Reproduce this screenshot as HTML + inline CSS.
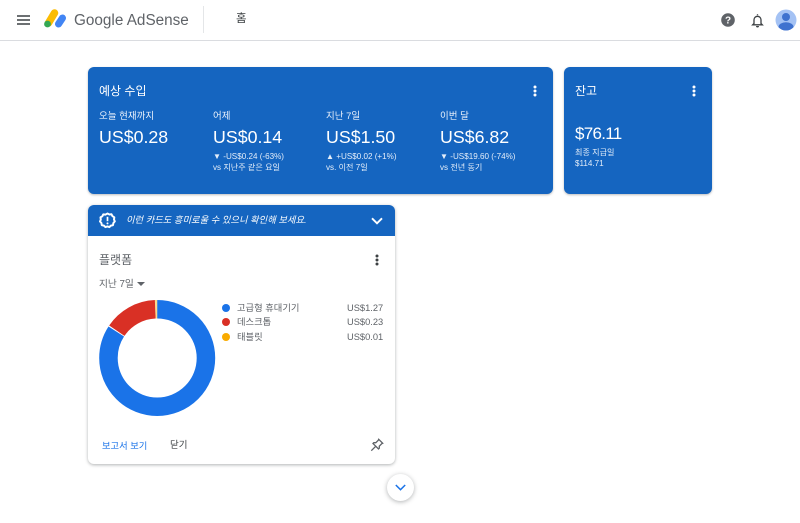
<!DOCTYPE html>
<html lang="ko">
<head>
<meta charset="utf-8">
<title>Google AdSense</title>
<style>
html,body{margin:0;padding:0;width:800px;height:523px;overflow:hidden;background:#fff}
#p{position:absolute;left:0;top:0;width:800px;height:523px;filter:blur(.3px);font-family:"Liberation Sans","Noto Sans CJK KR",sans-serif;color:#3c4043}
.a{position:absolute;white-space:nowrap}
.card{position:absolute;background:#1565c0;border-radius:6px;box-shadow:0 1px 2px rgba(60,64,67,.35)}
.w{color:#fff}
.lbl{font-size:9.5px;line-height:14px;color:#eaf1fb}
.big{font-size:17.8px;line-height:24px;color:#fff}
.sm{font-size:8.1px;line-height:11px;color:#e3edf9}
.dot{position:absolute;width:8px;height:8px;border-radius:50%}
.leg{font-size:9.3px;line-height:14px;color:#5f6368}
svg{position:absolute;display:block}
</style>
</head>
<body>
<div id="p">
<!-- header -->
<div class="a" style="left:0;top:40px;width:800px;height:1px;background:#dadce0"></div>
<svg style="left:16px;top:14px" width="15" height="12" viewBox="0 0 15 12"><path d="M1 2h13M1 6h13M1 10h13" stroke="#3c4043" stroke-width="1.6"/></svg>
<svg style="left:43px;top:8px" width="24" height="22" viewBox="0 0 24 22">
<path d="M5.500 15 11.500 5" stroke="#fbbc04" stroke-width="7.500" stroke-linecap="round"/>
<path d="M15.500 16 19.500 10" stroke="#4285f4" stroke-width="7" stroke-linecap="round"/>
<circle cx="4.500" cy="16" r="3.400" fill="#34a853"/>
</svg>
<div class="a" style="left:74px;top:10px;font-size:15.300px;line-height:22px;color:#5f6368">Google AdSense</div>
<div class="a" style="left:203px;top:6px;width:1px;height:27px;background:#e4e6e8"></div>
<div class="a" style="left:236px;top:12px;font-size:11.500px;line-height:15px;color:#3c4043">홈</div>
<svg style="left:721px;top:13px" width="14" height="14" viewBox="0 0 14 14"><circle cx="7" cy="7" r="6.800" fill="#5f6368"/><text x="7" y="10.600" font-size="10" font-weight="700" text-anchor="middle" fill="#fff" font-family="Liberation Sans">?</text></svg>
<svg style="left:751px;top:13px" width="13" height="15" viewBox="0 0 13 15"><path d="M6.500 1.200v1M3 10.500V6.800a3.500 3.500 0 0 1 7 0v3.700l1.300 1.300H1.700z" fill="none" stroke="#3c4043" stroke-width="1.300"/><path d="M5 13h3a1.500 1.500 0 0 1-3 0z" fill="#3c4043"/></svg>
<svg style="left:775px;top:9px" width="22" height="22" viewBox="0 0 22 22"><defs><clipPath id="c"><circle cx="11" cy="11" r="10.500"/></clipPath></defs><circle cx="11" cy="11" r="10.500" fill="#a4c2f4"/><g clip-path="url(#c)" fill="#3f72cf"><circle cx="11" cy="8" r="4"/><ellipse cx="11" cy="18" rx="7.500" ry="4.800"/></g></svg>

<!-- estimated earnings -->
<div class="card" style="left:88px;top:67px;width:465px;height:127px"></div>
<div class="a w" style="left:99px;top:83px;font-size:12px;line-height:17px">예상 수입</div>
<svg style="left:533px;top:85px" width="4" height="12" viewBox="0 0 4 12" fill="#fff"><circle cx="2" cy="2" r="1.500"/><circle cx="2" cy="6" r="1.500"/><circle cx="2" cy="10" r="1.500"/></svg>

<div class="a lbl" style="left:99px;top:110px">오늘 현재까지</div>
<div class="a big" style="left:99px;top:125px">US$0.28</div>

<div class="a lbl" style="left:213px;top:110px">어제</div>
<div class="a big" style="left:213px;top:125px">US$0.14</div>
<div class="a sm" style="left:213px;top:151px">▼ -US$0.24 (-63%)</div>
<div class="a sm" style="left:213px;top:162px">vs 지난주 같은 요일</div>

<div class="a lbl" style="left:326px;top:110px">지난 7일</div>
<div class="a big" style="left:326px;top:125px">US$1.50</div>
<div class="a sm" style="left:326px;top:151px">▲ +US$0.02 (+1%)</div>
<div class="a sm" style="left:326px;top:162px">vs. 이전 7일</div>

<div class="a lbl" style="left:440px;top:110px">이번 달</div>
<div class="a big" style="left:440px;top:125px">US$6.82</div>
<div class="a sm" style="left:440px;top:151px">▼ -US$19.60 (-74%)</div>
<div class="a sm" style="left:440px;top:162px">vs 전년 동기</div>

<!-- balance -->
<div class="card" style="left:564px;top:67px;width:148px;height:127px"></div>
<div class="a w" style="left:575px;top:83px;font-size:12px;line-height:17px">잔고</div>
<svg style="left:692px;top:85px" width="4" height="12" viewBox="0 0 4 12" fill="#fff"><circle cx="2" cy="2" r="1.500"/><circle cx="2" cy="6" r="1.500"/><circle cx="2" cy="10" r="1.500"/></svg>
<div class="a" style="left:575px;top:122px;font-size:17px;line-height:24px;letter-spacing:-.7px;color:#fff">$76.11</div>
<div class="a sm" style="left:575px;top:147px">최종 지급일</div>
<div class="a sm" style="left:575px;top:158px">$114.71</div>

<!-- platform card -->
<div class="a" style="left:88px;top:205px;width:307px;height:259px;background:#fff;border-radius:6px;box-shadow:0 1px 3px rgba(60,64,67,.4)"></div>
<div class="a" style="left:88px;top:205px;width:307px;height:31px;background:#1565c0;border-radius:6px 6px 0 0"></div>
<svg style="left:99px;top:212px" width="17" height="17" viewBox="0 0 17 17"><path d="M8.500 1.500l1.900 1 2.100-.2 1 1.900 1.800 1.100-.3 2.200.8 1.900-1.400 1.600-.4 2.100-2.100.5-1.500 1.500-2-.7-2 .7-1.500-1.500-2.100-.5-.4-2.100L1 9.500l.8-1.900-.3-2.200 1.800-1.100 1-1.900 2.100.2z" fill="none" stroke="#fff" stroke-width="2" stroke-linejoin="round"/><path d="M8.500 4.800v4.400" stroke="#fff" stroke-width="1.700"/><circle cx="8.500" cy="11.400" r="1" fill="#fff"/></svg>
<div class="a w" style="left:126px;top:213px;font-size:9.300px;line-height:14px;font-style:italic">이런 카드도 흥미로울 수 있으니 확인해 보세요.</div>
<svg style="left:371px;top:217px" width="12" height="8" viewBox="0 0 12 8"><path d="M1 1.300 6 6.300 11 1.300" fill="none" stroke="#fff" stroke-width="1.900"/></svg>

<div class="a" style="left:99px;top:252px;font-size:12px;line-height:17px;color:#5f6368">플랫폼</div>
<svg style="left:375px;top:254px" width="4" height="12" viewBox="0 0 4 12" fill="#3c4043"><circle cx="2" cy="2" r="1.500"/><circle cx="2" cy="6" r="1.500"/><circle cx="2" cy="10" r="1.500"/></svg>
<div class="a" style="left:99px;top:278px;font-size:9.700px;line-height:14px;color:#5f6368">지난 7일</div>
<svg style="left:137px;top:282px" width="8" height="4" viewBox="0 0 8 4"><path d="M0 0h8L4 4z" fill="#5f6368"/></svg>

<!-- donut -->
<svg style="left:99px;top:299px" width="117" height="118" viewBox="0 0 117 118">
<g transform="rotate(-90 58.200 59)" fill="none" stroke-width="18.500">
<circle cx="58.200" cy="59" r="48.750" stroke="#1a73e8" stroke-dasharray="257.300 400"/>
<circle cx="58.200" cy="59" r="48.750" stroke="#d93025" stroke-dasharray="45.500 400" stroke-dashoffset="-258.300"/>
<circle cx="58.200" cy="59" r="48.750" stroke="#f9ab00" stroke-opacity=".45" stroke-dasharray="2.400 400" stroke-dashoffset="-303.800"/>
</g>
</svg>

<!-- legend -->
<div class="dot" style="left:222px;top:303.500px;background:#1a73e8"></div>
<div class="a leg" style="left:237px;top:301px">고급형 휴대기기</div>
<div class="a leg" style="left:347px;top:301px">US$1.27</div>
<div class="dot" style="left:222px;top:318px;background:#d93025"></div>
<div class="a leg" style="left:237px;top:315px">데스크톱</div>
<div class="a leg" style="left:347px;top:315px">US$0.23</div>
<div class="dot" style="left:222px;top:332.500px;background:#f9ab00"></div>
<div class="a leg" style="left:237px;top:330px">태블릿</div>
<div class="a leg" style="left:347px;top:330px">US$0.01</div>

<!-- footer -->
<div class="a" style="left:102px;top:439px;font-size:9.300px;line-height:14px;color:#1a73e8">보고서 보기</div>
<div class="a" style="left:170px;top:439px;font-size:9.500px;line-height:14px;color:#3c4043">닫기</div>
<svg style="left:370px;top:438px" width="14" height="14" viewBox="0 0 14 14"><path d="M8.700 1.300 12.700 5.300 11.800 5.700 9.300 8.200 9.300 10.200 8.500 11 3 5.500 3.800 4.700 5.800 4.700 8.300 2.200ZM5.700 8.300 1.300 12.700" fill="none" stroke="#5f6368" stroke-width="1.300"/></svg>

<!-- scroll button -->
<div class="a" style="left:387px;top:474px;width:27px;height:27px;border-radius:50%;background:#fff;box-shadow:0 1px 5px rgba(60,64,67,.4)"></div>
<svg style="left:395px;top:484px" width="11" height="7" viewBox="0 0 11 7"><path d="M.8 1 5.500 5.700 10.200 1" fill="none" stroke="#1a73e8" stroke-width="1.500"/></svg>
</div>
</body>
</html>
